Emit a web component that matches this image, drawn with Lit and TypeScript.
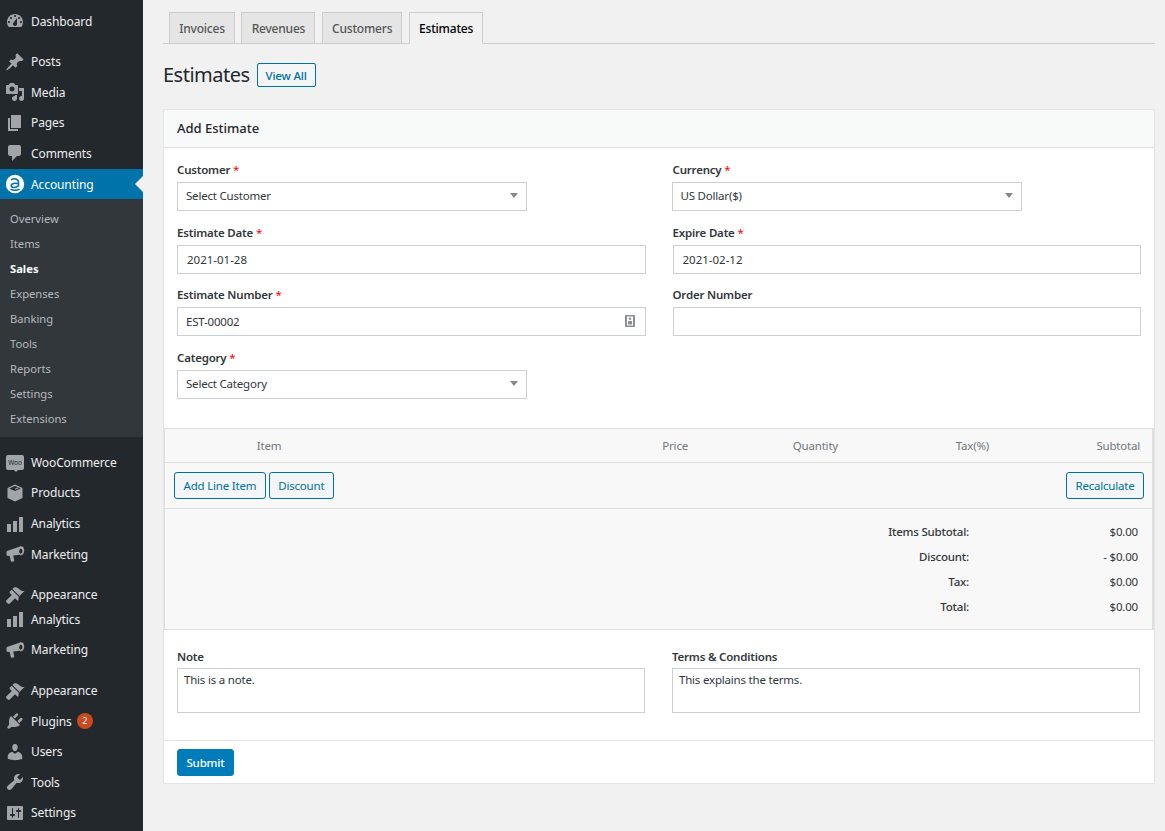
// Accounting / Add Estimate screen
import { LitElement, html, css, svg } from 'lit';
import { customElement } from 'lit/decorators.js';

// sidebar icons, 20x20 viewBox
const icons: Record<string, any> = {
    dashboard: svg`<path d="M3.76 16h12.48c1.1-1.37 1.76-3.11 1.76-5 0-4.42-3.58-8-8-8s-8 3.58-8 8c0 1.89.66 3.63 1.76 5zM10 4c.55 0 1 .45 1 1s-.45 1-1 1-1-.45-1-1 .45-1 1-1zM6 6c.55 0 1 .45 1 1s-.45 1-1 1-1-.45-1-1 .45-1 1-1zm8 0c.55 0 1 .45 1 1s-.45 1-1 1-1-.45-1-1 .45-1 1-1zm-5.37 5.55L12 7v6c0 1.1-.9 2-2 2s-2-.9-2-2c0-.57.24-1.08.63-1.45zM4 10c.55 0 1 .45 1 1s-.45 1-1 1-1-.45-1-1 .45-1 1-1zm12 0c.55 0 1 .45 1 1s-.45 1-1 1-1-.45-1-1 .45-1 1-1z"/>`,
    post: svg`<path d="M10.44 3.02l1.82-1.82 6.36 6.35-1.83 1.82c-1.05-.68-2.48-.57-3.41.36l-.75.75c-.92.93-1.04 2.35-.35 3.41l-1.83 1.82-2.41-2.41-2.8 2.79c-.42.42-3.38 2.71-3.8 2.29s1.86-3.39 2.28-3.81l2.79-2.79L4.1 9.36l1.83-1.82c1.05.69 2.48.57 3.4-.36l.75-.75c.93-.92 1.05-2.35.36-3.41z"/>`,
    media: svg`<path d="M13 11V4c0-.55-.45-1-1-1h-1.67L9 1H5L3.67 3H2c-.55 0-1 .45-1 1v7c0 .55.45 1 1 1h10c.55 0 1-.45 1-1zM7 4.5c1.38 0 2.5 1.12 2.5 2.5S8.38 9.5 7 9.5 4.5 8.38 4.5 7 5.62 4.5 7 4.5zM14 6h5v10.5c0 1.38-1.12 2.5-2.5 2.5S14 17.88 14 16.5s1.12-2.5 2.5-2.5c.17 0 .34.02.5.05V9h-3V6zm-4 8.05V13h2v3.5c0 1.38-1.12 2.5-2.5 2.5S7 17.88 7 16.5 8.12 14 9.5 14c.17 0 .34.02.5.05z"/>`,
    page: svg`<path d="M6 15V2h10v13H6zm-1 1h8v2H3V5h2v11z"/>`,
    comments: svg`<path d="M5 2h9c1.1 0 2 .9 2 2v7c0 1.1-.9 2-2 2h-2l-5 5v-5H5c-1.1 0-2-.9-2-2V4c0-1.1.9-2 2-2z"/>`,
    box: svg`<path fill-rule="evenodd" d="M10 1.500l7.500 3.500v10l-7.500 3.500-7.500-3.500V5zM4.300 5.400L10 8l5.700-2.600L10 3zM9.300 6l1.400.6 3-1.400-1.400-.6z"/>`,
    chart: svg`<path d="M18 18V3h-4v15h4zm-6 0V7H8v11h4zm-6 0v-8H2v8h4z"/>`,
    megaphone: svg`<path fill-rule="evenodd" d="M18.300 3.300c1.300 1.500 1.300 5.200-.2 7-1 1.200-2.300 1.300-3.300.5l-6.600.6 1 4.900c.1.600-.2 1-.8 1.100l-1.600.3c-.5.1-.9-.2-1-.7l-1.200-5.200-1.600.1c-.8 0-1.500-.6-1.500-1.400V8.300c0-.8.5-1.300 1.200-1.500l10.900-3.900c1.500-1 3.900-.6 4.700.4zM15.800 4.700c-1 .2-1.600 1.400-1.600 2.800s.7 2.300 1.600 2.200c.9-.1 1.600-1.200 1.600-2.600s-.7-2.500-1.600-2.400z"/>`,
    brush: svg`<path d="M14.480 11.060L7.410 3.990l1.500-1.500c.5-.56 2.300-.47 3.510.32 1.210.8 1.430 1.280 2.910 2.100 1.180.64 2.450 1.260 4.170 1.060l-5.020 5.090zm-.71.71L6.700 4.700 4.830 6.580c-.39.39-.39 1.020 0 1.410l1.940 1.940L1.500 15.200c-.6.600-.6 1.500 0 2.100l1.200 1.200c.6.600 1.500.6 2.100 0l5.270-5.270 1.940 1.940c.39.39 1.020.39 1.410 0z"/>`,
    plugin: svg`<path d="M13.110 4.360L9.870 7.600 8 5.730l3.240-3.240c.35-.34 1.050-.2 1.560.32.52.51.66 1.210.31 1.550zm-8 1.770l.91-1.120 9.010 9.010-1.190.84c-.71.71-2.630 1.160-3.820 1.160H6.140L4.900 17.260c-.59.59-1.540.59-2.120 0-.59-.58-.59-1.530 0-2.120l1.240-1.240v-3.880c0-1.130.4-3.050 1.090-3.890zm7.260 3.970l3.240-3.240c.34-.35 1.040-.21 1.550.31.52.51.66 1.210.31 1.550l-3.240 3.250z"/>`,
    users: svg`<path d="M10 9.250c-2.270 0-2.730-3.440-2.730-3.440C7 4.020 7.820 2 9.970 2c2.160 0 2.980 2.020 2.710 3.810 0 0-.41 3.440-2.680 3.440zm0 2.570L12.720 10c2.390 0 4.520 2.330 4.520 4.530v2.490s-3.650 1.130-7.240 1.130c-3.650 0-7.240-1.130-7.240-1.130v-2.490c0-2.250 1.940-4.480 4.470-4.480z"/>`,
    tools: svg`<path d="M16.680 9.770c-1.340 1.340-3.300 1.670-4.950.99l-5.410 6.520c-.99.99-2.590.99-3.580 0s-.99-2.59 0-3.570l6.520-5.420c-.68-1.650-.35-3.610.99-4.950 1.280-1.280 3.120-1.620 4.720-1.060l-2.890 2.890 2.820 2.820 2.860-2.870c.53 1.580.18 3.410-1.080 4.650z"/>`,
    settings: svg`<path d="M18 16V4c0-.55-.45-1-1-1H3c-.55 0-1 .45-1 1v12c0 .55.45 1 1 1h14c.55 0 1-.45 1-1zM8 11h1c.55 0 1 .45 1 1s-.45 1-1 1H8v1.500c0 .28-.22.5-.5.5s-.5-.22-.5-.5V13H6c-.55 0-1-.45-1-1s.45-1 1-1h1V5.500c0-.28.22-.5.5-.5s.5.22.5.5V11zm5-2h-1c-.55 0-1-.45-1-1s.45-1 1-1h1V5.500c0-.28.22-.5.5-.5s.5.22.5.5V7h1c.55 0 1 .45 1 1s-.45 1-1 1h-1v5.500c0 .28-.22.5-.5.5s-.5-.22-.5-.5V9z"/>`,
};

const sub = ['Overview', 'Items', 'Sales', 'Expenses', 'Banking', 'Tools', 'Reports', 'Settings', 'Extensions'];

@customElement("app-root")
class AppRoot extends LitElement {
    static styles = css`
        :host {
            display: flex;
            min-height: 831px;
            background: #f1f1f1;
            color: #444;
            font-family: "Noto Sans", "Open Sans", sans-serif;
            font-size: 11.500px;
            letter-spacing: -0.2px;
        }
        * { box-sizing: border-box; }

        /* sidebar */
        .side {
            width: 143px;
            flex: none;
            background: #23282d;
            padding-top: 5.800px;
            color: #eee;
        }
        .menu {
            display: flex;
            align-items: center;
            height: 30.600px;
            font-size: 12px;
            letter-spacing: -0.1px;
        }
        .menu svg.ic {
            width: 20px;
            height: 20px;
            margin-left: 5px;
            fill: #a0a5aa;
            flex: none;
        }
        .menu span.t { margin-left: 6px; }
        .sep { height: 10px; }
        .tight { margin-top: -6px; }
        .current {
            background: #0073aa;
            color: #fff;
            position: relative;
        }
        .current::after {
            content: "";
            position: absolute;
            right: 0;
            top: 50%;
            margin-top: -8px;
            border: 8px solid transparent;
            border-right-color: #f1f1f1;
            border-left-width: 0;
        }
        .subs {
            background: #32373c;
            padding: 6.200px 0 6.500px;
            margin-bottom: 10px;
        }
        .subs div {
            height: 25px;
            line-height: 25px;
            padding-left: 10px;
            font-size: 11.200px;
            letter-spacing: 0;
            color: #b4b9be;
        }
        .subs div.on { color: #fff; font-weight: 700; }
        .badge {
            width: 16px;
            height: 16px;
            border-radius: 50%;
            background: #ca4a1f;
            color: #fff;
            font-size: 9px;
            line-height: 16px;
            text-align: center;
            margin-left: 5px;
        }
        .woo {
            width: 18px;
            height: 15px;
            margin-left: 6px;
            margin-right: 1px;
            background: #a0a5aa;
            border-radius: 2px;
            color: #23282d;
            font-size: 6.500px;
            line-height: 15px;
            text-align: center;
            flex: none;
            position: relative;
        }
        .woo::after {
            content: "";
            position: absolute;
            left: 8px;
            top: 15px;
            border: 2px solid transparent;
            border-top-color: #a0a5aa;
            border-bottom-width: 0;
        }

        /* main column */
        .main {
            flex: 1;
            min-width: 0;
            padding: 12px 10px 48px 20px;
        }
        .tabs {
            display: flex;
            gap: 6.400px;
            padding-left: 6px;
            height: 32px;
            border-bottom: 1px solid #ccc;
        }
        .tab {
            height: 32px;
            padding: 0 9.200px;
            line-height: 31px;
            border: 1px solid #ccc;
            background: #e5e5e5;
            color: #555;
            font-size: 12px;
            font-weight: 500;
        }
        .tab.on {
            background: #f1f1f1;
            border-bottom-color: #f1f1f1;
            color: #000;
        }
        .title {
            display: flex;
            align-items: center;
            gap: 7px;
            height: 24px;
            margin: 19px 0 22px;
        }
        h1 {
            margin: -2px 0 0;
            font-size: 20px;
            font-weight: 400;
            letter-spacing: -0.5px;
            color: #23282d;
        }
        .btn {
            display: inline-flex;
            align-items: center;
            height: 27px;
            padding: 0 8px;
            border: 1px solid #0071a1;
            border-radius: 3px;
            background: #f3f5f6;
            color: #0071a1;
        }
        .title .btn {
            height: 24px;
            font-weight: 500;
            border-radius: 2px;
        }

        /* card */
        .card {
            background: #fff;
            border: 1px solid #e2e4e7;
        }
        .card-head {
            height: 38px;
            padding-left: 13px;
            line-height: 37px;
            background: #f8f9f9;
            border-bottom: 1px solid #dcdcde;
            font-size: 13px;
            font-weight: 500;
            letter-spacing: 0;
            color: #23282d;
        }
        .form {
            display: grid;
            grid-template-columns: 1fr 1fr;
            column-gap: 27px;
            row-gap: 11.670px;
            padding: 12px 13px 29px;
        }
        label {
            display: block;
            height: 20px;
            line-height: 20px;
            margin-bottom: 2px;
            font-weight: 600;
            color: #32373c;
        }
        label i {
            color: #f00;
            font-style: normal;
            font-weight: 400;
        }
        .box {
            display: flex;
            align-items: center;
            justify-content: space-between;
            width: 100%;
            height: 29px;
            padding: 0 8px 1px;
            border: 1px solid #ccd0d4;
            background: #fff;
            color: #32373c;
            font: inherit;
            letter-spacing: inherit;
        }
        input.box {
            padding: 1px 8px 0 9px;
            letter-spacing: 0;
        }
        .select { width: 350px; padding-bottom: 2px; }
        .select.shift { margin-left: -1px; }
        .select::after {
            content: "";
            border: 4.500px solid transparent;
            border-top: 5px solid #888;
            border-bottom-width: 0;
        }
        .id-ic { width: 14px; height: 14px; fill: #8c8f94; }

        /* line items */
        .items {
            background: #f8f8f8;
            border: 1px solid #dfdfdf;
            border-right-width: 2px;
        }
        .items-head {
            display: grid;
            grid-template-columns: 208px 315px 150px 151px 1fr;
            height: 34px;
            line-height: 34px;
            border-bottom: 1px solid #dfdfdf;
            color: #72777c;
            text-align: right;
        }
        .items-head span:first-child { text-align: center; }
        .items-head span:last-child { padding-right: 12px; }
        .items-actions {
            display: flex;
            gap: 3px;
            align-items: center;
            height: 46px;
            padding: 0 8px 0 9px;
            border-bottom: 1px solid #dfdfdf;
        }
        .items-actions .btn:last-child { margin-left: auto; }
        .items-actions .btn { padding: 0 8.500px; }
        .totals {
            display: grid;
            grid-template-columns: 1fr 169px;
            grid-auto-rows: 25px;
            align-items: center;
            padding: 10px 14px 10px;
            text-align: right;
            color: #32373c;
        }
        .totals b { font-weight: 500; }

        .notes {
            display: grid;
            grid-template-columns: 468px 468px;
            column-gap: 27px;
            padding: 17px 13px 27px;
        }
        .notes label { margin-bottom: 1px; }
        textarea {
            display: block;
            width: 100%;
            height: 45px;
            padding: 3px 6px;
            border: 1px solid #ccd0d4;
            border-radius: 0;
            resize: none;
            font: inherit;
            letter-spacing: inherit;
            color: #32373c;
        }
        .foot {
            border-top: 1px solid #e2e4e7;
            padding: 8px 13px 7px;
        }
        .submit {
            display: block;
            height: 27px;
            padding: 0 8.500px;
            border: 1px solid #007cba;
            border-radius: 3px;
            background: #007cba;
            color: #fff;
            font: inherit;
            letter-spacing: inherit;
            font-weight: 500;
        }
    `;

    menuItem(icon: string, label: string, cls = '') {
        return html`<div class="menu ${cls}">
            <svg class="ic" viewBox="0 0 20 20">${icons[icon]}</svg>
            <span class="t">${label}</span>
        </div>`;
    }

    field(name: string, control: unknown, required = true) {
        return html`<div>
            <label>${name}${required ? html` <i>*</i>` : ''}</label>
            ${control}
        </div>`;
    }

    render() {
        return html`
            <nav class="side">
                ${this.menuItem('dashboard', 'Dashboard')}
                <div class="sep"></div>
                ${this.menuItem('post', 'Posts')}
                ${this.menuItem('media', 'Media')}
                ${this.menuItem('page', 'Pages')}
                ${this.menuItem('comments', 'Comments')}
                <div class="menu current">
                    <svg class="ic" viewBox="0 0 20 20">
                        <circle cx="10" cy="10" r="9.200" fill="#fff"/>
                        <path d="M6 5.800c2.200-1.500 6.800-1.500 7.500 1.700v5.200M13.500 10c-2-1-7.300-1-7.300 1.600 0 2.600 5 2.400 7.300.2M5.500 15.300c2.800 1.300 6.500 1.200 9-.2" fill="none" stroke="#0073aa" stroke-width="1.500"/>
                    </svg>
                    <span class="t">Accounting</span>
                </div>
                <div class="subs">
                    ${sub.map(s => html`<div class=${s === 'Sales' ? 'on' : ''}>${s}</div>`)}
                </div>
                <div class="menu"><span class="woo">Woo</span><span class="t">WooCommerce</span></div>
                ${this.menuItem('box', 'Products')}
                ${this.menuItem('chart', 'Analytics')}
                ${this.menuItem('megaphone', 'Marketing')}
                <div class="sep"></div>
                ${this.menuItem('brush', 'Appearance')}
                ${this.menuItem('chart', 'Analytics', 'tight')}
                ${this.menuItem('megaphone', 'Marketing')}
                <div class="sep"></div>
                ${this.menuItem('brush', 'Appearance')}
                <div class="menu">
                    <svg class="ic" viewBox="0 0 20 20">${icons.plugin}</svg>
                    <span class="t">Plugins</span>
                    <span class="badge">2</span>
                </div>
                ${this.menuItem('users', 'Users')}
                ${this.menuItem('tools', 'Tools')}
                ${this.menuItem('settings', 'Settings')}
            </nav>

            <main class="main">
                <div class="tabs">
                    ${['Invoices', 'Revenues', 'Customers'].map(t => html`<div class="tab">${t}</div>`)}
                    <div class="tab on">Estimates</div>
                </div>
                <div class="title">
                    <h1>Estimates</h1>
                    <span class="btn">View All</span>
                </div>

                <section class="card">
                    <div class="card-head">Add Estimate</div>
                    <div class="form">
                        ${this.field('Customer', html`<div class="box select">Select Customer</div>`)}
                        ${this.field('Currency', html`<div class="box select shift">US Dollar($)</div>`)}
                        ${this.field('Estimate Date', html`<input class="box" value="2021-01-28">`)}
                        ${this.field('Expire Date', html`<input class="box" value="2021-02-12">`)}
                        ${this.field('Estimate Number', html`<div class="box">EST-00002
                            <svg class="id-ic" viewBox="0 0 14 14"><path fill-rule="evenodd" d="M3 1h8c.6 0 1 .4 1 1v10c0 .6-.4 1-1 1H3c-.6 0-1-.4-1-1V2c0-.6.4-1 1-1zm1 1.500v9h6v-9zM7 3.500a1.300 1.300 0 1 1 0 2.600 1.300 1.300 0 0 1 0-2.600zM5 7h4v3.500H5z"/></svg>
                        </div>`)}
                        ${this.field('Order Number', html`<input class="box">`, false)}
                        ${this.field('Category', html`<div class="box select">Select Category</div>`)}
                    </div>

                    <div class="items">
                        <div class="items-head">
                            <span>Item</span><span>Price</span><span>Quantity</span><span>Tax(%)</span><span>Subtotal</span>
                        </div>
                        <div class="items-actions">
                            <span class="btn">Add Line Item</span>
                            <span class="btn">Discount</span>
                            <span class="btn">Recalculate</span>
                        </div>
                        <div class="totals">
                            <b>Items Subtotal:</b><span>$0.00</span>
                            <b>Discount:</b><span>- $0.00</span>
                            <b>Tax:</b><span>$0.00</span>
                            <b>Total:</b><span>$0.00</span>
                        </div>
                    </div>

                    <div class="notes">
                        ${this.field('Note', html`<textarea>This is a note.</textarea>`, false)}
                        ${this.field('Terms & Conditions', html`<textarea>This explains the terms.</textarea>`, false)}
                    </div>
                    <div class="foot"><button class="submit">Submit</button></div>
                </section>
            </main>
        `;
    }
}

declare global {
    interface HTMLElementTagNameMap {
        "app-root": AppRoot;
    }
}
